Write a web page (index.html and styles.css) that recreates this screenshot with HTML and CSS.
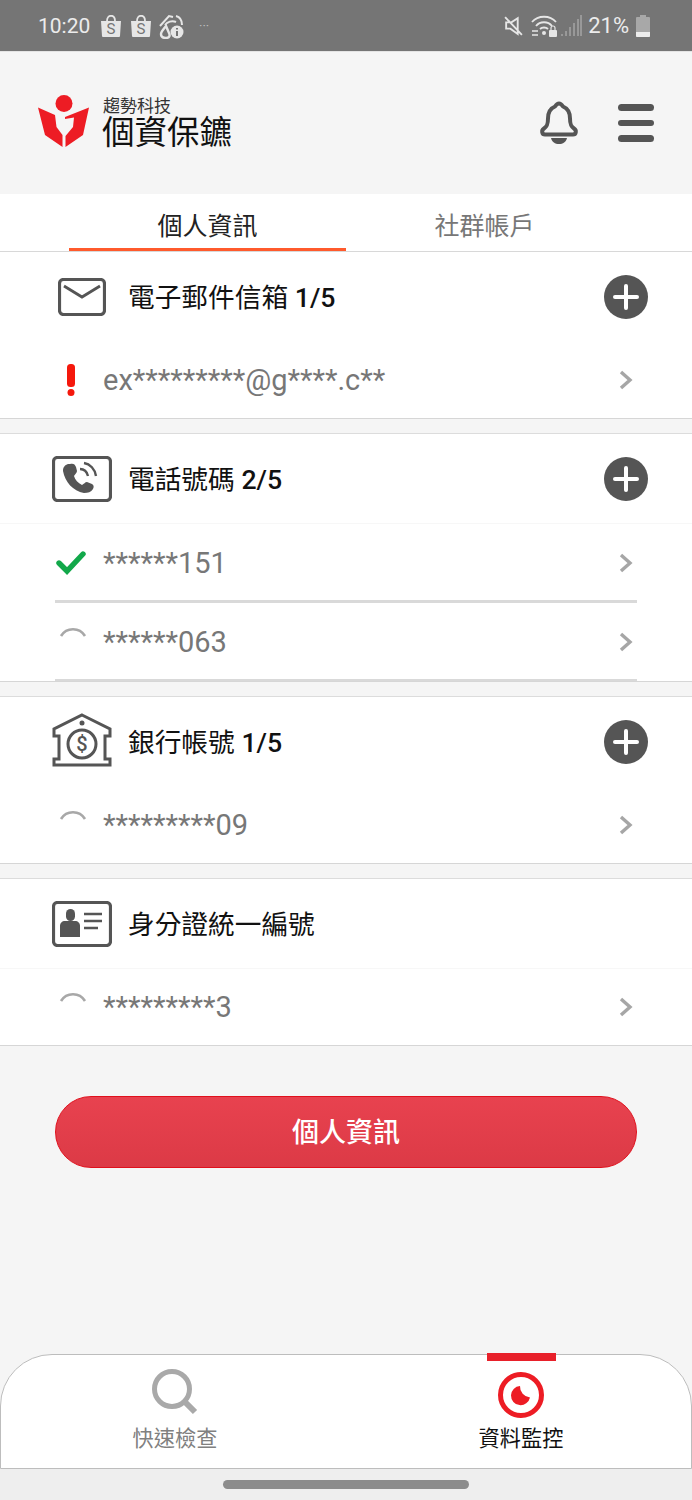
FILE: index.html
```html
<!DOCTYPE html>
<html lang="zh-Hant">
<head>
    <meta charset="UTF-8">
    <meta name="viewport" content="width=device-width, initial-scale=1.0">
    <title>個資保鑣</title>
    <link rel="stylesheet" href="styles.css">
</head>
<body>
    <div class="status-bar">
        <div class="status-left">
            <span class="clock">10:20</span>
            <svg class="bag" viewBox="0 0 20 22"><path d="M0 6h20l-1 15a1 1 0 0 1-1 1H2a1 1 0 0 1-1-1z" fill="#e6e6e6"/><path d="M6 6c0-7 8-7 8 0" fill="none" stroke="#e6e6e6" stroke-width="1.8"/><text x="10" y="19" text-anchor="middle" class="bag-s">S</text></svg>
            <svg class="bag" viewBox="0 0 20 22"><path d="M0 6h20l-1 15a1 1 0 0 1-1 1H2a1 1 0 0 1-1-1z" fill="#e6e6e6"/><path d="M6 6c0-7 8-7 8 0" fill="none" stroke="#e6e6e6" stroke-width="1.8"/><text x="10" y="19" text-anchor="middle" class="bag-s">S</text></svg>
            <svg class="care" viewBox="0 0 26 26"><path d="M2 13 11 3l4 1M18 3c4 1 6 5 6 9M7 12c2-3 7-5 11-3" fill="none" stroke="#e6e6e6" stroke-width="2"/><path d="M8 13c-3 4-5 6-5 8 0 3 2 4 5 4 4 0 4-3 3-5z" fill="none" stroke="#e6e6e6" stroke-width="2.4"/><circle cx="19" cy="19" r="6.5" fill="#e6e6e6"/><path d="M19 18v5M19 15v1.6" stroke="#757575" stroke-width="2"/></svg>
            <span class="more">···</span>
        </div>
        <div class="status-right">
            <svg class="mute" viewBox="0 0 20 20"><path d="M2 2l16 17M3 7v6h4l7 5V3L8 7z" fill="none" stroke="#e6e6e6" stroke-width="1.8"/></svg>
            <svg class="wifi" viewBox="0 0 26 22"><path d="M1 7c6-7 18-7 24 0M5 11c4-5 12-5 16 0M9 14c2-2 6-2 8 0" fill="none" stroke="#e6e6e6" stroke-width="1.8"/><circle cx="13" cy="18" r="2" fill="#e6e6e6"/><path d="M1 16h6M1 20h6" stroke="#e6e6e6" stroke-width="1.4"/><rect x="18" y="15" width="8" height="7" rx="1" fill="#e6e6e6"/><path d="M20 15v-2a2 2 0 0 1 4 0v2" fill="none" stroke="#e6e6e6" stroke-width="1.2"/></svg>
            <svg class="signal" viewBox="0 0 21 21"><path d="M1 21v-2M5 21v-5M9 21V12M13 21V8M17 21V4M20 21V0" stroke="#a8a8a8" stroke-width="1.4"/></svg>
            <span class="battery-text">21%</span>
            <svg class="battery" viewBox="0 0 14 22"><path d="M4 0h6v2h3a1 1 0 0 1 1 1v18a1 1 0 0 1-1 1H1a1 1 0 0 1-1-1V3a1 1 0 0 1 1-1h3z" fill="#a8a8a8"/><path d="M0 17h14v4a1 1 0 0 1-1 1H1a1 1 0 0 1-1-1z" fill="#ececec"/></svg>
        </div>
    </div>

    <header class="app-header">
        <div class="brand">
            <svg class="brand-mark" viewBox="0 0 52 52">
                <circle cx="26" cy="8.500" r="8.500" fill="#ed1c24"/>
                <path d="M0 12.500 17 20l1.500 12 6 8v12L7 40z" fill="#ed1c24"/>
                <path d="M51 12.500 27 22v2l9-1.500-1 9.500-7.500 9v11L45 40z" fill="#ed1c24"/>
            </svg>
            <div class="brand-text">
                <span class="brand-company">趨勢科技</span>
                <span class="brand-name">個資保鑣</span>
            </div>
        </div>
        <div class="header-actions">
            <svg class="bell" viewBox="0 0 40 44"><path d="M20 2.500c2 0 3 1.500 4 3 5 2 7 6 7 12 0 6 1 8 4 10 3 2 2 6-1 6H6c-3 0-4-4-1-6 3-2 4-4 4-10 0-6 2-10 7-12 1-1.500 2-3 4-3z" fill="none" stroke="#555" stroke-width="4" stroke-linejoin="round"/><path d="M12 37h16c-1 4-4 6-8 6s-7-2-8-6z" fill="#555"/></svg>
            <div class="menu"><i></i><i></i><i></i></div>
        </div>
    </header>

    <nav class="tabs">
        <div class="tab active">個人資訊</div>
        <div class="tab">社群帳戶</div>
    </nav>

    <main class="content">
        <section class="card card-first">
            <div class="card-head">
                <div class="card-icon">
                    <svg class="icon-mail" viewBox="0 0 48 38"><rect x="1.500" y="1.500" width="45" height="35" rx="4" fill="none" stroke="#555" stroke-width="3.200"/><path d="M6 8l18 11L42 8" fill="none" stroke="#555" stroke-width="2.800"/></svg>
                </div>
                <h2 class="card-title">電子郵件信箱 <span class="count">1/5</span></h2>
                <span class="add"><i></i></span>
            </div>
            <div class="row">
                <span class="state"><svg viewBox="0 0 32 32"><rect x="12" y="0" width="8" height="23" rx="3.500" fill="#f5180c"/><circle cx="16" cy="28.500" r="3.500" fill="#f5180c"/></svg></span>
                <span class="value">ex*********@g****.c**</span>
                <svg class="chevron" viewBox="0 0 14 20"><path d="M2 2l9 8-9 8" fill="none" stroke="#a6a6a6" stroke-width="3.400"/></svg>
            </div>
        </section>

        <section class="card">
            <div class="card-head head-line">
                <div class="card-icon">
                    <svg viewBox="0 0 60 46"><rect x="1.500" y="1.500" width="57" height="43" rx="4" fill="none" stroke="#555" stroke-width="3.200"/><path d="M18 8c3-1 5 0 6 3l1 4c0 2-2 3-3 5 1 4 4 7 8 9 2-1 3-3 5-3l5 2c2 1 2 3 1 5-2 3-5 4-9 4-11-2-19-11-21-22 0-4 2-6 5-7z" fill="#555"/><path d="M28 13c4 0 7 3 8 7M32 7c6 1 11 6 12 13" fill="none" stroke="#555" stroke-width="2.400"/></svg>
                </div>
                <h2 class="card-title">電話號碼 <span class="count">2/5</span></h2>
                <span class="add"><i></i></span>
            </div>
            <div class="row row-low">
                <span class="state"><svg class="check" viewBox="0 0 32 24"><path d="M4 12l8 8L28 3" fill="none" stroke="#12a84a" stroke-width="5.400" stroke-linecap="round"/></svg></span>
                <span class="value">******151</span>
                <svg class="chevron" viewBox="0 0 14 20"><path d="M2 2l9 8-9 8" fill="none" stroke="#a6a6a6" stroke-width="3.400"/></svg>
            </div>
            <div class="divider divider-mid"></div>
            <div class="row row-low">
                <span class="state"><svg viewBox="0 0 32 32"><path d="M6 10A14 14 0 0 1 30 10" fill="none" stroke="#a8a8a8" stroke-width="2.600"/></svg></span>
                <span class="value">******063</span>
                <svg class="chevron" viewBox="0 0 14 20"><path d="M2 2l9 8-9 8" fill="none" stroke="#a6a6a6" stroke-width="3.400"/></svg>
            </div>
            <div class="divider"></div>
        </section>

        <section class="card">
            <div class="card-head">
                <div class="card-icon">
                    <svg class="icon-bank" viewBox="0 0 60 54"><path d="M30 2 58 16v7h-5v23h5v6H2v-6h5V23H2v-7z" fill="none" stroke="#555" stroke-width="3"/><circle cx="30" cy="10" r="2.500" fill="#555"/><circle cx="30" cy="31" r="14" fill="none" stroke="#555" stroke-width="3"/><text x="30" y="38" text-anchor="middle" class="dollar">$</text></svg>
                </div>
                <h2 class="card-title">銀行帳號 <span class="count">1/5</span></h2>
                <span class="add"><i></i></span>
            </div>
            <div class="row">
                <span class="state"><svg viewBox="0 0 32 32"><path d="M6 10A14 14 0 0 1 30 10" fill="none" stroke="#a8a8a8" stroke-width="2.600"/></svg></span>
                <span class="value">*********09</span>
                <svg class="chevron" viewBox="0 0 14 20"><path d="M2 2l9 8-9 8" fill="none" stroke="#a6a6a6" stroke-width="3.400"/></svg>
            </div>
        </section>

        <section class="card">
            <div class="card-head head-line">
                <div class="card-icon">
                    <svg viewBox="0 0 60 46"><rect x="1.500" y="1.500" width="57" height="43" rx="4" fill="none" stroke="#555" stroke-width="3.200"/><rect x="14" y="8" width="9" height="12" rx="4.500" fill="#555"/><path d="M8 36V25c0-3 2-5 5-5h10c3 0 5 2 5 5v11z" fill="#555"/><path d="M32 13h18M32 20h18M32 27h14" stroke="#555" stroke-width="2.600"/></svg>
                </div>
                <h2 class="card-title">身分證統一編號</h2>
            </div>
            <div class="row">
                <span class="state"><svg viewBox="0 0 32 32"><path d="M6 10A14 14 0 0 1 30 10" fill="none" stroke="#a8a8a8" stroke-width="2.600"/></svg></span>
                <span class="value">*********3</span>
                <svg class="chevron" viewBox="0 0 14 20"><path d="M2 2l9 8-9 8" fill="none" stroke="#a6a6a6" stroke-width="3.400"/></svg>
            </div>
        </section>

        <button class="primary-btn" type="button">個人資訊</button>
    </main>

    <footer class="bottom-nav">
        <div class="nav-item">
            <svg class="nav-icon" viewBox="0 0 46 46"><circle cx="20" cy="20" r="17.500" fill="none" stroke="#a9a9a9" stroke-width="5"/><path d="M32 32l11 11" stroke="#a9a9a9" stroke-width="6"/></svg>
            <span class="nav-label">快速檢查</span>
        </div>
        <div class="nav-item nav-current">
            <span class="nav-marker"></span>
            <svg class="nav-icon" viewBox="0 0 46 46"><circle cx="23" cy="23" r="20.500" fill="none" stroke="#ed1c24" stroke-width="5"/><path d="M22 14A9.600 9.600 0 1 0 32 25.500 11 11 0 0 1 22 14z" fill="#ed1c24"/></svg>
            <span class="nav-label">資料監控</span>
        </div>
    </footer>

    <div class="gesture-bar"><span></span></div>
</body>
</html>
```

FILE: styles.css
```css
body {
    margin: 0;
    width: 692px;
    height: 1500px;
    display: flex;
    flex-direction: column;
    overflow: hidden;
    background-color: #f5f5f5;
    font-family: Roboto, "Noto Sans CJK TC", sans-serif;
    color: #111;
}
svg {
    display: block;
}

/* status bar */
.status-bar {
    height: 51px;
    flex: none;
    background-color: #757575;
    border-bottom: 1px solid #e4e4e4;
    display: flex;
    justify-content: space-between;
    align-items: center;
    padding: 0 42px 0 38px;
    color: #ececec;
}
.status-left, .status-right {
    display: flex;
    align-items: center;
}
.clock {
    font-size: 21px;
    width: 63px;
}
.bag {
    width: 20px;
    height: 22px;
    margin-right: 10px;
}
.bag-s {
    font-family: Roboto, sans-serif;
    font-size: 15px;
    fill: #757575;
}
.care {
    width: 26px;
    height: 26px;
    margin-left: -3px;
}
.more {
    font-size: 13px;
    margin-left: 15px;
    color: #bdbdbd;
}
.mute {
    width: 21px;
    height: 21px;
    margin-right: 7px;
}
.wifi {
    width: 26px;
    height: 22px;
    margin-right: 4px;
}
.signal {
    width: 21px;
    height: 21px;
    margin-right: 6px;
}
.battery-text {
    font-size: 22px;
    margin-right: 7px;
}
.battery {
    width: 14px;
    height: 22px;
}

/* app header */
.app-header {
    height: 142px;
    flex: none;
    display: flex;
    justify-content: space-between;
    align-items: center;
    padding: 0 38px;
    box-sizing: border-box;
}
.brand {
    display: flex;
    align-items: center;
    gap: 13px;
}
.brand-mark {
    width: 52px;
    height: 52px;
    margin-bottom: 4px;
}
.brand-text {
    display: flex;
    flex-direction: column;
    margin-top: 2px;
}
.brand-company {
    font-size: 17px;
    line-height: 17px;
    color: #333;
}
.brand-name {
    font-size: 32.500px;
    line-height: 35px;
    margin: 1px 0 0 -1px;
    color: #111;
}
.header-actions {
    display: flex;
    align-items: center;
    gap: 39px;
}
.bell {
    width: 40px;
    height: 44px;
}
.menu {
    width: 36px;
    display: flex;
    flex-direction: column;
    gap: 9px;
}
.menu i {
    display: block;
    height: 6.500px;
    border-radius: 4px;
    background-color: #555;
}

/* tabs */
.tabs {
    height: 58px;
    flex: none;
    background-color: #fff;
    border-bottom: 1px solid #d8d8d8;
    box-sizing: border-box;
    display: flex;
    padding-left: 69px;
}
.tab {
    width: 277px;
    font-size: 25px;
    line-height: 66px;
    height: 57px;
    text-align: center;
    color: #777;
    box-sizing: border-box;
}
.tab.active {
    color: #222;
    border-bottom: 3px solid #ff5a2c;
}

/* cards */
.content {
    flex: 1;
    display: flex;
    flex-direction: column;
    gap: 14px;
}
.card {
    background-color: #fff;
    border-top: 1px solid #dcdcdc;
    border-bottom: 1px solid #d6d6d6;
}
.card-first {
    border-top: none;
}
.card-head {
    height: 90px;
    display: flex;
    align-items: center;
    padding: 0 44px 0 52px;
    box-sizing: border-box;
}
.head-line {
    border-bottom: 1px solid #f7f7f7;
}
.card-icon {
    width: 60px;
    margin-right: 16px;
    display: flex;
    justify-content: center;
}
.card-icon svg {
    width: 60px;
}
.card-icon .icon-mail {
    width: 48px;
}
.card-icon .icon-bank {
    margin-bottom: 4px;
}
.card-title {
    flex: 1;
    margin: 0 0 3px;
    font-size: 26.700px;
    font-weight: 400;
    color: #111;
}
.count {
    font-weight: 500;
}
.dollar {
    font-family: Roboto, sans-serif;
    font-size: 20px;
    font-weight: 500;
    fill: #555;
}
.add {
    width: 44px;
    height: 44px;
    border-radius: 50%;
    background-color: #555;
    position: relative;
}
.add::before, .add::after {
    content: "";
    position: absolute;
    background-color: #fff;
    border-radius: 2px;
}
.add::before {
    left: 9px;
    right: 9px;
    top: 20px;
    height: 4px;
}
.add::after {
    top: 9px;
    bottom: 9px;
    left: 20px;
    width: 4px;
}
.row {
    height: 76px;
    display: flex;
    align-items: center;
    padding: 0 59px 0 55px;
    box-sizing: border-box;
}
.row-low {
    padding-top: 2px;
}
.state {
    width: 32px;
    margin-right: 16px;
}
.state svg {
    width: 32px;
    height: 32px;
}
.state .check {
    height: 24px;
}
.value {
    flex: 1;
    font-size: 29px;
    color: #777;
}
.chevron {
    width: 14px;
    height: 20px;
}
.divider {
    height: 2px;
    margin: 0 55px;
    background-color: #d9d9d9;
}
.divider-mid {
    height: 3px;
}
.primary-btn {
    display: block;
    width: 582px;
    height: 72px;
    margin: 36px 55px 0;
    padding-bottom: 4px;
    border: 1px solid #e0101c;
    border-radius: 36px;
    background: linear-gradient(#e8424f, #dc3a46);
    color: #fff;
    font-family: Roboto, "Noto Sans CJK TC", sans-serif;
    font-size: 27px;
    font-weight: 500;
}

/* bottom nav */
.bottom-nav {
    height: 115px;
    flex: none;
    box-sizing: border-box;
    display: flex;
    background-color: #fff;
    border: 1px solid #bdbdbd;
    border-radius: 52px 52px 0 0;
}
.nav-item {
    position: relative;
    width: 346px;
    display: flex;
    flex-direction: column;
    align-items: center;
    padding: 14px 0 0 2px;
    box-sizing: border-box;
}
.nav-icon {
    width: 46px;
    height: 46px;
}
.nav-label {
    font-size: 21.200px;
    line-height: 30px;
    margin-top: 9px;
    color: #808080;
}
.nav-current {
    width: 344px;
    padding: 17px 0 0 4px;
}
.nav-current .nav-label {
    margin-top: 6px;
    color: #111;
}
.nav-marker {
    position: absolute;
    top: -2px;
    left: 140px;
    width: 69px;
    height: 8px;
    background-color: #e8202a;
}
.gesture-bar {
    height: 31px;
    flex: none;
    background-color: #eee;
    display: flex;
    justify-content: center;
    padding-top: 11px;
    box-sizing: border-box;
}
.gesture-bar span {
    width: 246px;
    height: 9px;
    border-radius: 5px;
    background-color: #8c8c8c;
}
```
